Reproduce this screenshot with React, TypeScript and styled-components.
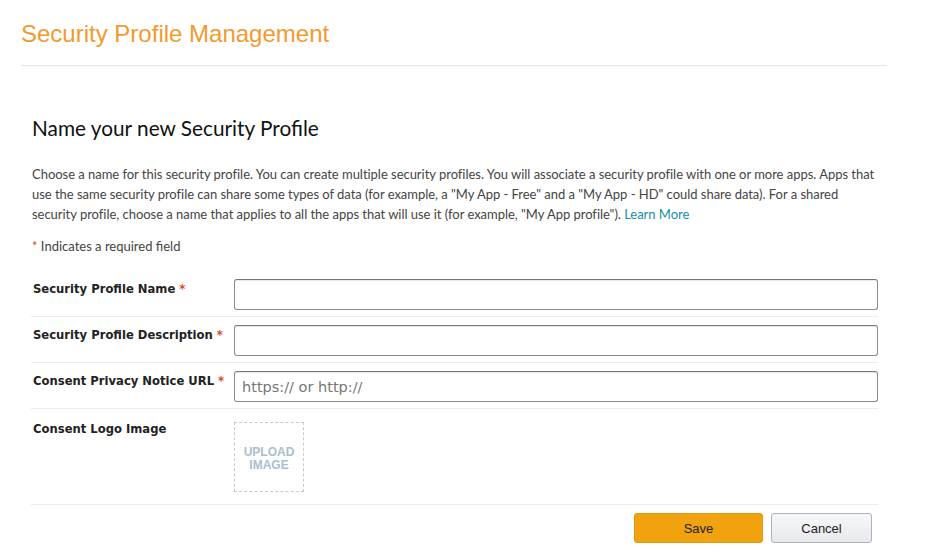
import React from 'react';
import styled, { createGlobalStyle } from 'styled-components';

const GlobalStyle = createGlobalStyle`
  body {
    margin: 0;
    background: #fff;
    font-family: Lato, "Noto Sans", sans-serif;
  }
`;

const Page = styled.div`
  width: 866px;
  margin-left: 21px;
`;

const Header = styled.div`
  height: 66px;
  box-sizing: border-box;
  padding-top: 20px;
  border-bottom: 1px solid #e5e5e5;
`;

const Title = styled.h1`
  margin: 0;
  font-family: "Liberation Sans", Arial, sans-serif;
  font-weight: normal;
  font-size: 24px;
  line-height: 28px;
  color: #f39a2e;
`;

const Content = styled.div`
  width: 850px;
  margin-left: 10px;
  padding-top: 49px;
`;

const Heading = styled.h2`
  margin: 0 0 0 1px;
  font-weight: normal;
  font-size: 20.8px;
  line-height: 26px;
  color: #111;
`;

const Intro = styled.p`
  margin: 23px 0 0 1px;
  font-size: 13px;
  line-height: 20px;
  letter-spacing: -0.03px;
  color: #444;
`;

const Link = styled.a`
  color: #138ead;
  text-decoration: none;
`;

const Required = styled.p`
  margin: 12px 0 0 1px;
  font-size: 13px;
  line-height: 20px;
  color: #444;
`;

const Star = styled.span`
  color: #e4432a;
`;

const Form = styled.div`
  width: 847px;
  margin-top: 15px;
`;

const Row = styled.div<{ $tall?: boolean }>`
  display: grid;
  grid-template-columns: 203px 1fr;
  align-items: start;
  padding: ${(p) => (p.$tall ? '13px 0 12px' : '8px 0 6px')};
  border-bottom: 1px solid #ececec;
`;

const Label = styled.label<{ $top?: number }>`
  padding: ${(p) => p.$top ?? 3}px 0 0 2px;
  font-family: "DejaVu Sans", Verdana, sans-serif;
  font-weight: bold;
  font-size: 11.6px;
  line-height: 15px;
  color: #222;
`;

const Input = styled.input`
  box-sizing: border-box;
  width: 644px;
  height: 31px;
  padding: 0 7px;
  border: 1px solid #8a8a8a;
  border-top-color: #777;
  border-radius: 3px;
  box-shadow: inset 0 1px 0 #e8e8e8;
  font-family: "DejaVu Sans", Verdana, sans-serif;
  font-size: 14.5px;
  color: #333;
  outline: none;

  &::placeholder {
    color: #777;
  }
`;

const Upload = styled.div`
  box-sizing: border-box;
  width: 70px;
  height: 70px;
  padding-top: 4px;
  border: 1px dashed #c9c9c9;
  display: flex;
  align-items: center;
  justify-content: center;
  text-align: center;
  font-family: "Liberation Sans", Arial, sans-serif;
  font-weight: bold;
  font-size: 12px;
  line-height: 13px;
  color: #a8bfd0;
`;

const Actions = styled.div`
  display: flex;
  justify-content: flex-end;
  gap: 8px;
  padding: 8px 6px 0 0;
`;

const Button = styled.button<{ $primary?: boolean }>`
  box-sizing: border-box;
  height: 30px;
  width: ${(p) => (p.$primary ? '129px' : '101px')};
  border-radius: 3px;
  border: 1px solid ${(p) => (p.$primary ? '#e39a0c' : '#adb1b8')};
  background: ${(p) => (p.$primary ? '#f0a30f' : 'linear-gradient(#f7f8fa, #e7e9ec)')};
  font-family: "Liberation Sans", Arial, sans-serif;
  font-size: 13px;
  color: #222;
  cursor: pointer;
`;

export default function App() {
  return (
    <>
      <GlobalStyle />
      <Page>
        <Header>
          <Title>Security Profile Management</Title>
        </Header>
        <Content>
          <Heading>Name your new Security Profile</Heading>
          <Intro>
            Choose a name for this security profile. You can create multiple security profiles. You will associate a
            security profile with one or more apps. Apps that
            <br />
            use the same security profile can share some types of data (for example, a "My App - Free" and a "My App -
            HD" could share data). For a shared
            <br />
            security profile, choose a name that applies to all the apps that will use it (for example, "My App
            profile"). <Link href="#">Learn More</Link>
          </Intro>
          <Required>
            <Star>*</Star> Indicates a required field
          </Required>
          <Form>
            <Row>
              <Label>
                Security Profile Name <Star>*</Star>
              </Label>
              <Input />
            </Row>
            <Row>
              <Label>
                Security Profile Description <Star>*</Star>
              </Label>
              <Input />
            </Row>
            <Row>
              <Label>
                Consent Privacy Notice URL <Star>*</Star>
              </Label>
              <Input placeholder="https:// or http://" />
            </Row>
            <Row $tall>
              <Label $top={0}>Consent Logo Image</Label>
              <Upload>
                UPLOAD
                <br />
                IMAGE
              </Upload>
            </Row>
            <Actions>
              <Button $primary>Save</Button>
              <Button>Cancel</Button>
            </Actions>
          </Form>
        </Content>
      </Page>
    </>
  );
}
